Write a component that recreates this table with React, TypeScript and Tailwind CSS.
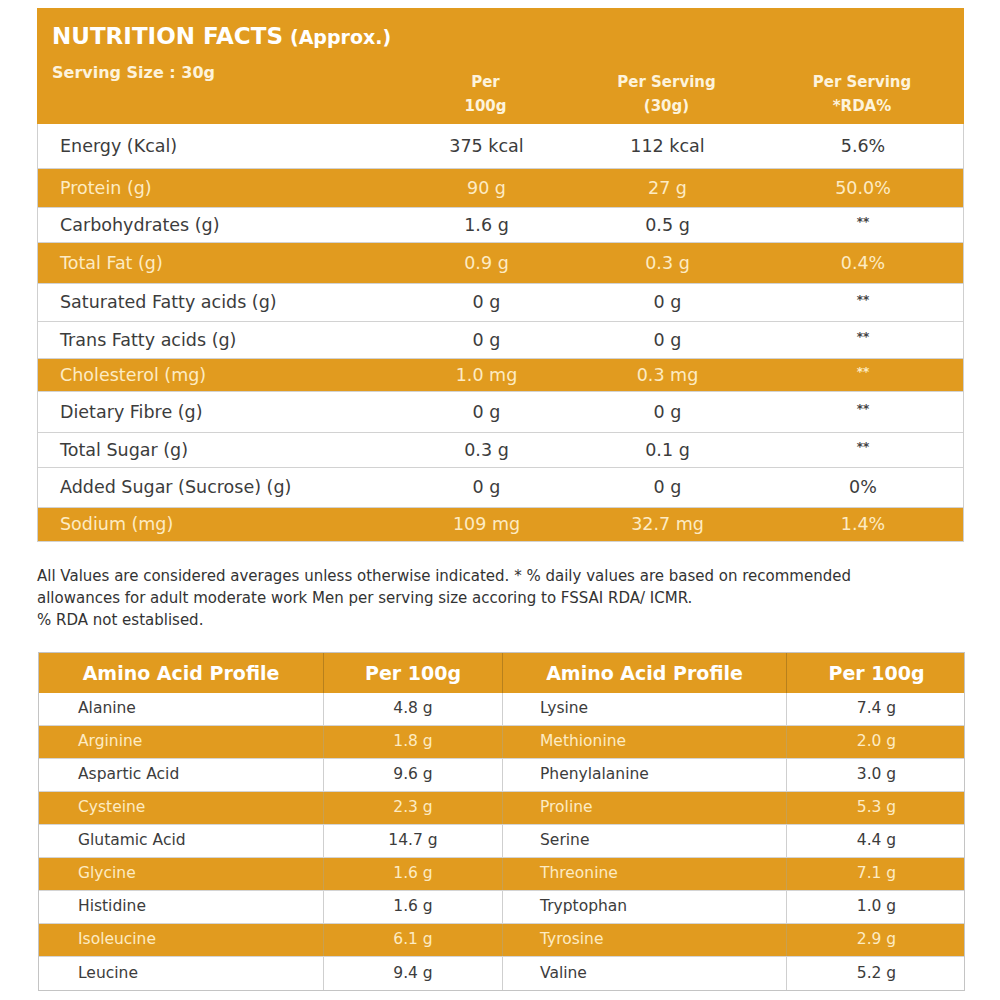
import React from "react";

const OR = "bg-[#e19b1f]";

type Row = { label: string; a: string; b: string; c: string; o: boolean; h: number };

const rows: Row[] = [
  { label: "Energy (Kcal)", a: "375 kcal", b: "112 kcal", c: "5.6%", o: false, h: 45 },
  { label: "Protein (g)", a: "90 g", b: "27 g", c: "50.0%", o: true, h: 39 },
  { label: "Carbohydrates (g)", a: "1.6 g", b: "0.5 g", c: "**", o: false, h: 35 },
  { label: "Total Fat (g)", a: "0.9 g", b: "0.3 g", c: "0.4%", o: true, h: 41 },
  { label: "Saturated Fatty acids (g)", a: "0 g", b: "0 g", c: "**", o: false, h: 38 },
  { label: "Trans Fatty acids (g)", a: "0 g", b: "0 g", c: "**", o: false, h: 37 },
  { label: "Cholesterol (mg)", a: "1.0 mg", b: "0.3 mg", c: "**", o: true, h: 33 },
  { label: "Dietary Fibre (g)", a: "0 g", b: "0 g", c: "**", o: false, h: 41 },
  { label: "Total Sugar (g)", a: "0.3 g", b: "0.1 g", c: "**", o: false, h: 35 },
  { label: "Added Sugar (Sucrose) (g)", a: "0 g", b: "0 g", c: "0%", o: false, h: 40 },
  { label: "Sodium (mg)", a: "109 mg", b: "32.7 mg", c: "1.4%", o: true, h: 34 },
];

const amino: [string, string, string, string][] = [
  ["Alanine", "4.8 g", "Lysine", "7.4 g"],
  ["Arginine", "1.8 g", "Methionine", "2.0 g"],
  ["Aspartic Acid", "9.6 g", "Phenylalanine", "3.0 g"],
  ["Cysteine", "2.3 g", "Proline", "5.3 g"],
  ["Glutamic Acid", "14.7 g", "Serine", "4.4 g"],
  ["Glycine", "1.6 g", "Threonine", "7.1 g"],
  ["Histidine", "1.6 g", "Tryptophan", "1.0 g"],
  ["Isoleucine", "6.1 g", "Tyrosine", "2.9 g"],
  ["Leucine", "9.4 g", "Valine", "5.2 g"],
];

function Cell({ v, o }: { v: string; o: boolean }) {
  if (v === "**") {
    return (
      <div className={`flex items-center justify-center text-[12px] font-bold leading-none ${o ? "text-[#fdebc3]" : "text-[#444]"} -mt-[6px]`}>
        **
      </div>
    );
  }
  return <div className="flex items-center justify-center">{v}</div>;
}

export default function App() {
  return (
    <div
      className="w-[1000px] h-[1000px] bg-white overflow-hidden"
      style={{ fontFamily: '"DejaVu Sans", "Open Sans", sans-serif' }}
    >
      <div className="ml-[37px] mt-[8px] w-[927px]">
        {/* Header */}
        <div className={`${OR} h-[116px] text-white flex flex-col`}>
          <div className="mt-[14px] pl-[15px] h-[28px] flex items-baseline leading-[28px] font-bold">
            <span className="text-[23px]">NUTRITION FACTS</span>
            <span className="text-[19px] ml-[7px]">(Approx.)</span>
          </div>
          <div className="mt-[11px] grid grid-cols-[361px_175px_187px_204px]">
            <div className="pl-[15px] text-[16px] font-bold leading-[24px] text-[#fdf3dc]">Serving Size : 30g</div>
            <div className="pt-[9px] text-center text-[15px] font-bold leading-[24px] text-[#fdf3dc]">
              Per
              <br />
              100g
            </div>
            <div className="pt-[9px] text-center text-[15px] font-bold leading-[24px] text-[#fdf3dc]">
              Per Serving
              <br />
              (30g)
            </div>
            <div className="pt-[9px] text-center text-[15px] font-bold leading-[24px] text-[#fdf3dc]">
              Per Serving
              <br />
              *RDA%
            </div>
          </div>
        </div>
        {/* Body */}
        <div className="border-x border-[#cfcfcf]">
          {rows.map((r, i) => (
            <div
              key={i}
              style={{ height: r.h }}
              className={`grid grid-cols-[361px_175px_187px_204px] text-[17.5px] border-b border-[#d2d2d2] ${
                r.o ? `${OR} text-[#fdebc3]` : "bg-white text-[#3c3c3c]"
              }`}
            >
              <div className="pl-[22px] flex items-center">{r.label}</div>
              <Cell v={r.a} o={r.o} />
              <Cell v={r.b} o={r.o} />
              <Cell v={r.c} o={r.o} />
            </div>
          ))}
        </div>
      </div>

      {/* Footnote */}
      <div className="ml-[37px] mt-[23px] text-[15px] leading-[22px] text-[#333]">
        All Values are considered averages unless otherwise indicated. * % daily values are based on recommended
        <br />
        allowances for adult moderate work Men per serving size accoring to FSSAI RDA/ ICMR.
        <br />% RDA not establised.
      </div>

      {/* Amino table */}
      <div className="ml-[38px] mt-[21px] w-[927px] border border-[#c4c4c4]">
        <div className={`${OR} grid grid-cols-[285px_179px_284px_179px] h-[40px] text-white font-bold text-[19px]`}>
          <div className="flex items-center justify-center border-r border-[#b7801c]">Amino Acid Profile</div>
          <div className="flex items-center justify-center border-r border-[#b7801c]">Per 100g</div>
          <div className="flex items-center justify-center border-r border-[#b7801c]">Amino Acid Profile</div>
          <div className="flex items-center justify-center">Per 100g</div>
        </div>
        {amino.map((r, i) => {
          const o = i % 2 === 1;
          return (
            <div
              key={i}
              className={`grid grid-cols-[285px_179px_284px_179px] h-[33px] text-[15.5px] ${
                i < amino.length - 1 ? "border-b border-[#d4d4d4]" : ""
              } ${o ? `${OR} text-[#fdebc3]` : "bg-white text-[#3c3c3c]"}`}
            >
              <div className={`pl-[39px] flex items-center border-r ${o ? "border-[#c9a04f]" : "border-[#cfcfcf]"}`}>{r[0]}</div>
              <div className={`flex items-center justify-center border-r ${o ? "border-[#c9a04f]" : "border-[#cfcfcf]"}`}>{r[1]}</div>
              <div className={`pl-[37px] flex items-center border-r ${o ? "border-[#c9a04f]" : "border-[#cfcfcf]"}`}>{r[2]}</div>
              <div className="flex items-center justify-center">{r[3]}</div>
            </div>
          );
        })}
      </div>
    </div>
  );
}
